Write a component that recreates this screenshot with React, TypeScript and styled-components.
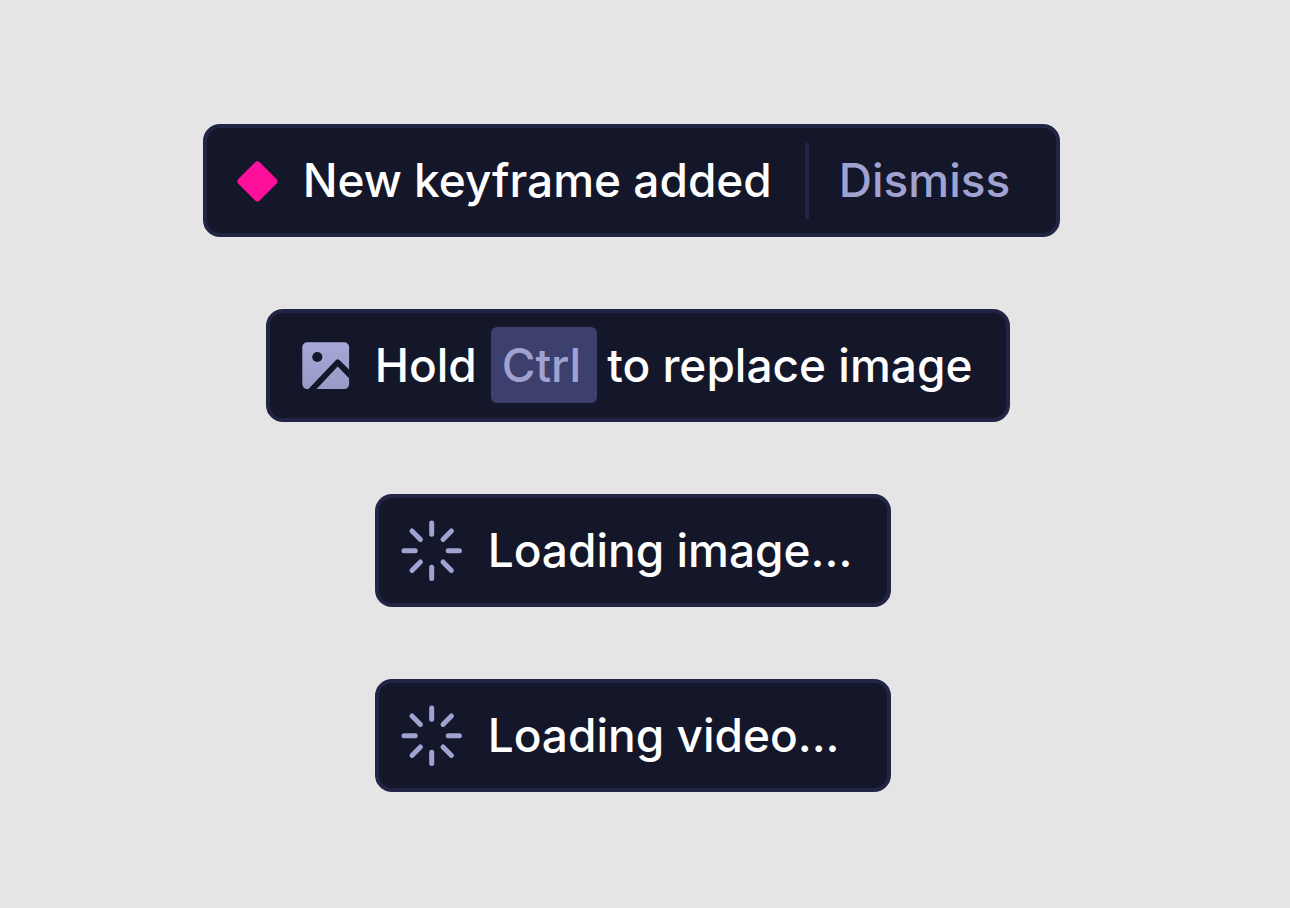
import React from "react";
import styled, { createGlobalStyle } from "styled-components";

const GlobalStyle = createGlobalStyle`
  *, *::before, *::after { box-sizing: border-box; }
  body {
    margin: 0;
    background: #e5e5e5;
    font-family: Inter, "Liberation Sans", sans-serif;
  }
`;

const Page = styled.main`
  display: flex;
  justify-content: center;
  min-height: 100vh;
  padding: 124px 27px 116px 0;
`;

const Stack = styled.div`
  display: flex;
  flex-direction: column;
  align-items: flex-start;
  gap: 72px;
`;

const Toast = styled.div<{ $indent?: number; $start: number; $end: number; $min?: number }>`
  display: flex;
  align-items: center;
  min-width: ${(p) => p.$min ?? 0}px;
  min-height: 113px;
  margin-left: ${(p) => p.$indent ?? 0}px;
  padding: 0 ${(p) => p.$end}px 0 ${(p) => p.$start}px;
  border: 4px solid #222446;
  border-radius: 17px;
  background: #141729;
  color: #ffffff;
  font-size: 46px;
  font-weight: 500;
  line-height: 76px;
  white-space: nowrap;
`;

const Icon = styled.svg`
  flex: none;
  display: block;
  margin-right: 25px;
`;

const Message = styled.p`
  margin: 0;
  padding-bottom: 2px;
`;

const Divider = styled.span`
  width: 4px;
  height: 76px;
  margin: 0 30px 0 33px;
  background: #222446;
`;

const DismissButton = styled.button`
  padding: 0 0 2px;
  border: 0;
  background: none;
  color: #a0a3d1;
  font: inherit;
  cursor: pointer;
`;

const Key = styled.kbd`
  display: inline-block;
  margin: 0 10px 0 14px;
  padding: 0 16px 0 11px;
  border-radius: 6px;
  background: #3d406d;
  color: #a0a3d1;
  font: inherit;
`;

const KeyframeIcon = () => (
  <Icon width="42" height="42" viewBox="0 0 42 42" aria-hidden="true">
    <rect x="6.3" y="6.3" width="30.2" height="30.2" rx="3.6" fill="#fc0f9a" transform="rotate(45 21.4 21.4)" />
  </Icon>
);

const ImageIcon = () => (
  <Icon width="48" height="48" viewBox="0 0 48 48" aria-hidden="true">
    <defs>
      <linearGradient id="image-fill" x1="0" y1="0" x2="0" y2="1">
        <stop offset="0" stopColor="#a5a8d6" />
        <stop offset="1" stopColor="#989bc6" />
      </linearGradient>
      <clipPath id="image-frame">
        <rect x="0.3" y="0.3" width="46.8" height="46.8" rx="5" />
      </clipPath>
    </defs>
    <g clipPath="url(#image-frame)">
      <rect width="48" height="48" fill="url(#image-fill)" />
      <circle cx="15.3" cy="15" r="5.1" fill="#141729" />
      <path d="M5.5 48L34 18Q35.7 16.4 37.4 18L48 28.6V37.2L35.7 24.5L13.6 48Z" fill="#141729" />
    </g>
  </Icon>
);

const SpinnerIcon = () => (
  <Icon width="62" height="62" viewBox="0 0 62 62" aria-hidden="true">
    <g stroke="#a0a3d1" strokeWidth="5" strokeLinecap="round">
      <path d="M30.7 3V14.2M30.7 47.2v11.2M3 30.7H14.2M47.2 30.7h11.2" />
      <path d="M11 11l8.4 8.4M42 42l8.4 8.4M50.4 11l-8.4 8.4M19.4 42l-8.4 8.4" />
    </g>
  </Icon>
);

const Loading = ({ label }: { label: string }) => (
  <Toast role="status" $indent={172} $start={22} $end={34} $min={516}>
    <SpinnerIcon />
    <Message>{label}</Message>
  </Toast>
);

export default function App() {
  return (
    <>
      <GlobalStyle />
      <Page>
        <Stack>
          <Toast role="status" $start={29} $end={46}>
            <KeyframeIcon />
            <Message>New keyframe added</Message>
            <Divider />
            <DismissButton type="button">Dismiss</DismissButton>
          </Toast>
          <Toast role="status" $indent={63} $start={32} $end={34}>
            <ImageIcon />
            <Message>
              Hold
              <Key>Ctrl</Key>
              to replace image
            </Message>
          </Toast>
          <Loading label="Loading image..." />
          <Loading label="Loading video..." />
        </Stack>
      </Page>
    </>
  );
}
